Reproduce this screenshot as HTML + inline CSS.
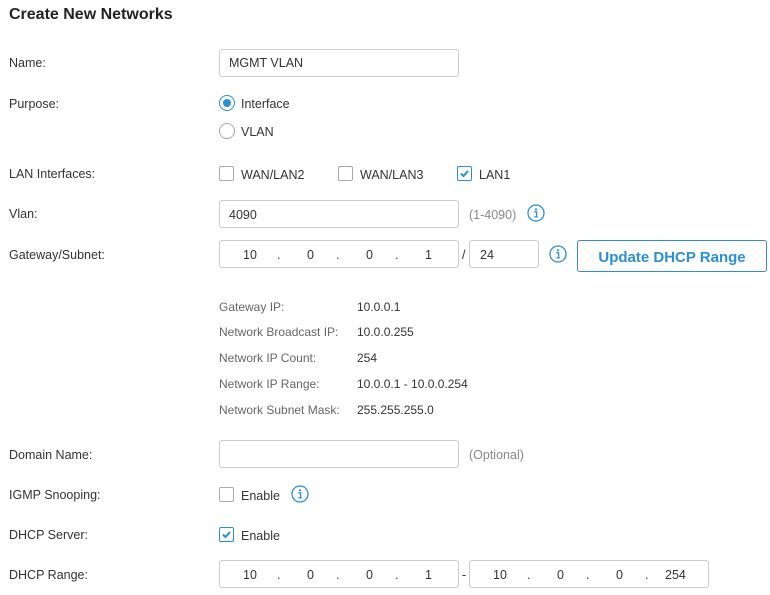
<!DOCTYPE html>
<html><head><meta charset="utf-8"><style>
*{margin:0;padding:0;box-sizing:border-box}
body{width:770px;height:595px;background:#fff;font-family:"Liberation Sans",Arial,sans-serif;font-size:12.5px;color:#333;position:relative;overflow:hidden}
.a{position:absolute;line-height:14px;white-space:nowrap;margin-top:1px}
.g{color:#666}
.gr{color:#888}
.in{position:absolute;border:1px solid #ccc;border-radius:3px;background:#fff}
.cb{position:absolute;width:15px;height:15px;border:1px solid #aaa;border-radius:2px;background:#fff}
.cb.on{border-color:#2a8fd6}
.cb.on svg{position:absolute;left:1px;top:1px}
.rd{position:absolute;width:16px;height:16px;border:1px solid #aaa;border-radius:50%}
.rd.on{border-color:#2a8fd6}
.rd.on:after{content:"";position:absolute;left:3px;top:3px;width:8px;height:8px;border-radius:50%;background:#2a8fd6}
.info{position:absolute;width:18px;height:18px}
</style></head><body>
<div class="a" style="left:9px;top:5px;font-size:16px;font-weight:bold;line-height:18px;color:#222">Create New Networks</div>

<div class="a" style="left:9px;top:55px">Name:</div>
<div class="in" style="left:219px;top:49px;width:240px;height:28px"></div>
<div class="a" style="left:229px;top:55px">MGMT VLAN</div>

<div class="a" style="left:9px;top:96px">Purpose:</div>
<div class="rd on" style="left:219px;top:95px"></div>
<div class="a" style="left:241px;top:96px">Interface</div>
<div class="rd" style="left:219px;top:123px"></div>
<div class="a" style="left:241px;top:124px">VLAN</div>

<div class="a" style="left:9px;top:166px">LAN Interfaces:</div>
<div class="cb" style="left:219px;top:166px"></div>
<div class="a" style="left:241px;top:167px">WAN/LAN2</div>
<div class="cb" style="left:338px;top:166px"></div>
<div class="a" style="left:360px;top:167px">WAN/LAN3</div>
<div class="cb on" style="left:457px;top:166px"><svg width="11" height="11" viewBox="0 0 11 11"><path d="M2 5.5 L4.5 8 L9 3" stroke="#2a8fd6" stroke-width="2" fill="none"/></svg></div>
<div class="a" style="left:479px;top:167px">LAN1</div>

<div class="a" style="left:9px;top:206px">Vlan:</div>
<div class="in" style="left:219px;top:200px;width:240px;height:28px"></div>
<div class="a" style="left:229px;top:207px">4090</div>
<div class="a gr" style="left:469px;top:207px">(1-4090)</div>
<svg class="info" style="left:527px;top:204px" viewBox="0 0 18 18"><circle cx="9" cy="9" r="8" stroke="#2a8fd6" stroke-width="1.3" fill="none"/><circle cx="9" cy="5.3" r="1.1" fill="#2a8fd6"/><path d="M7.3 7.8H9.6V12.6M7.3 12.9H10.8" stroke="#2a8fd6" stroke-width="1.3" fill="none"/></svg>

<div class="a" style="left:9px;top:247px">Gateway/Subnet:</div>
<div class="in" style="left:219px;top:240px;width:240px;height:28px"></div>
<div class="a" style="left:243px;top:247px">10</div>
<div class="a" style="left:277px;top:247px">.</div>
<div class="a" style="left:307px;top:247px">0</div>
<div class="a" style="left:336px;top:247px">.</div>
<div class="a" style="left:366px;top:247px">0</div>
<div class="a" style="left:395px;top:247px">.</div>
<div class="a" style="left:425px;top:247px">1</div>
<div class="a" style="left:462px;top:247px">/</div>
<div class="in" style="left:469px;top:240px;width:70px;height:28px"></div>
<div class="a" style="left:480px;top:247px">24</div>
<svg class="info" style="left:549px;top:245px" viewBox="0 0 18 18"><circle cx="9" cy="9" r="8" stroke="#2a8fd6" stroke-width="1.3" fill="none"/><circle cx="9" cy="5.3" r="1.1" fill="#2a8fd6"/><path d="M7.3 7.8H9.6V12.6M7.3 12.9H10.8" stroke="#2a8fd6" stroke-width="1.3" fill="none"/></svg>
<div style="position:absolute;left:577px;top:240px;width:190px;height:32px;border:1px solid #2a8fd6;border-radius:3px;color:#2a8fd6;font-weight:bold;font-size:15px;text-align:center;line-height:32px;padding-top:1px">Update DHCP Range</div>

<div class="a g" style="left:219px;top:299px;font-size:12px">Gateway IP:</div>
<div class="a" style="left:357px;top:299px;font-size:12px">10.0.0.1</div>
<div class="a g" style="left:219px;top:324px;font-size:12px">Network Broadcast IP:</div>
<div class="a" style="left:357px;top:324px;font-size:12px">10.0.0.255</div>
<div class="a g" style="left:219px;top:350px;font-size:12px">Network IP Count:</div>
<div class="a" style="left:357px;top:350px;font-size:12px">254</div>
<div class="a g" style="left:219px;top:376px;font-size:12px">Network IP Range:</div>
<div class="a" style="left:357px;top:376px;font-size:12px">10.0.0.1 - 10.0.0.254</div>
<div class="a g" style="left:219px;top:402px;font-size:12px">Network Subnet Mask:</div>
<div class="a" style="left:357px;top:402px;font-size:12px">255.255.255.0</div>

<div class="a" style="left:9px;top:447px">Domain Name:</div>
<div class="in" style="left:219px;top:440px;width:240px;height:28px"></div>
<div class="a gr" style="left:469px;top:447px">(Optional)</div>

<div class="a" style="left:9px;top:487px">IGMP Snooping:</div>
<div class="cb" style="left:219px;top:487px"></div>
<div class="a" style="left:241px;top:488px">Enable</div>
<svg class="info" style="left:291px;top:485px" viewBox="0 0 18 18"><circle cx="9" cy="9" r="8" stroke="#2a8fd6" stroke-width="1.3" fill="none"/><circle cx="9" cy="5.3" r="1.1" fill="#2a8fd6"/><path d="M7.3 7.8H9.6V12.6M7.3 12.9H10.8" stroke="#2a8fd6" stroke-width="1.3" fill="none"/></svg>

<div class="a" style="left:9px;top:527px">DHCP Server:</div>
<div class="cb on" style="left:219px;top:527px"><svg width="11" height="11" viewBox="0 0 11 11"><path d="M2 5.5 L4.5 8 L9 3" stroke="#2a8fd6" stroke-width="2" fill="none"/></svg></div>
<div class="a" style="left:241px;top:528px">Enable</div>

<div class="a" style="left:9px;top:567px">DHCP Range:</div>
<div class="in" style="left:219px;top:560px;width:240px;height:28px"></div>
<div class="a" style="left:243px;top:567px">10</div>
<div class="a" style="left:277px;top:567px">.</div>
<div class="a" style="left:307px;top:567px">0</div>
<div class="a" style="left:336px;top:567px">.</div>
<div class="a" style="left:366px;top:567px">0</div>
<div class="a" style="left:395px;top:567px">.</div>
<div class="a" style="left:425px;top:567px">1</div>
<div class="a" style="left:462px;top:567px">-</div>
<div class="in" style="left:469px;top:560px;width:240px;height:28px"></div>
<div class="a" style="left:493px;top:567px">10</div>
<div class="a" style="left:527px;top:567px">.</div>
<div class="a" style="left:557px;top:567px">0</div>
<div class="a" style="left:586px;top:567px">.</div>
<div class="a" style="left:616px;top:567px">0</div>
<div class="a" style="left:645px;top:567px">.</div>
<div class="a" style="left:665px;top:567px">254</div>
</body></html>
